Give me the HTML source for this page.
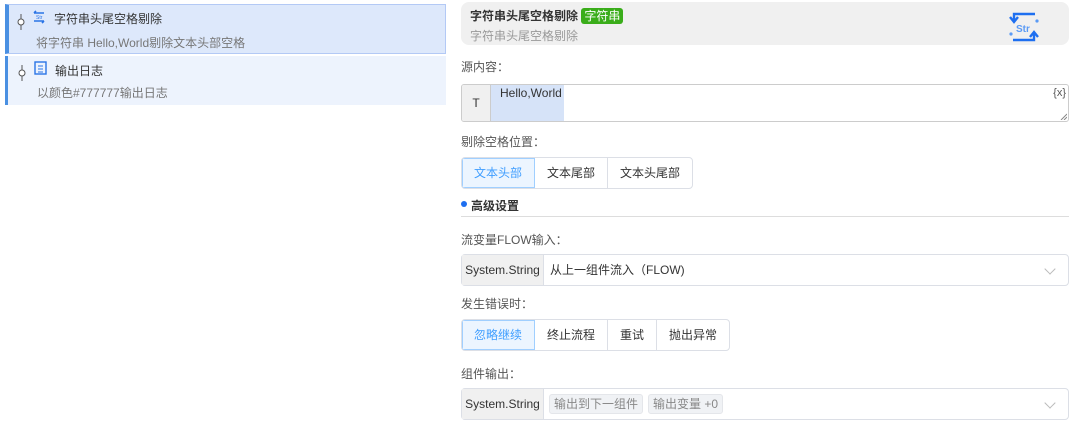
<!DOCTYPE html>
<html><head><meta charset="utf-8"><style>
*{box-sizing:border-box;margin:0;padding:0}
body{width:1075px;height:424px;background:#fff;font-family:"Liberation Sans","Noto Sans CJK SC",sans-serif;font-size:12px;color:#333;position:relative;overflow:hidden}
.abs{position:absolute}
.item{position:absolute;left:5px;width:441px}
.lbl{position:absolute;left:461px;color:#555;font-size:12px}
.seg{position:absolute;left:461px;display:flex;height:32px;border:1px solid #dcdfe6;border-radius:4px;overflow:hidden}
.seg div{padding:0 12px;line-height:30px;border-right:1px solid #dcdfe6;color:#333;font-size:12px}
.seg div:last-child{border-right:none}
.seg .on{background:#ecf5ff;color:#409eff;outline:1px solid #a0cfff;outline-offset:-1px}
.sel{position:absolute;left:461px;width:608px;height:32px;border:1px solid #dcdfe6;border-radius:4px;display:flex}
.sel .pre{width:82px;background:#f0f0f0;border-right:1px solid #dcdfe6;line-height:30px;text-align:center;color:#333}
.chev{position:absolute;right:14px;top:10px;width:8px;height:8px;border-right:1px solid #bbb;border-bottom:1px solid #bbb;transform:rotate(45deg)}
.tag{display:inline-block;background:#f0f2f5;border:1px solid #e4e6ea;border-radius:3px;color:#888;padding:0 4px;line-height:18px;margin-top:5px;margin-left:5px}
</style></head><body>

<div class="item" style="top:4px;height:50px;background:#dde8fb;border:1px solid #b3c9f5;border-left:4px solid #4a90e2">
  <svg class="abs" style="left:8px;top:9px" width="8" height="16"><line x1="4" y1="0" x2="4" y2="16" stroke="#555"/><circle cx="4" cy="8" r="3" fill="#fff" stroke="#555"/></svg>
  <svg class="abs" style="left:23px;top:5px" width="14" height="14"><path d="M2 3h10M2 3l2-2M12 11H2M12 11l-2 2" stroke="#2a74e6" stroke-width="1.6" fill="none"/><text x="4" y="9" font-size="5" fill="#2a74e6">Str</text></svg>
  <div class="abs" style="left:45px;top:5px;font-size:12px;color:#333">字符串头尾空格剔除</div>
  <div class="abs" style="left:27px;top:29px;color:#777">将字符串 Hello,World剔除文本头部空格</div>
</div>
<div class="item" style="top:56px;height:49px;background:#edf3fd;border-left:3px solid #4a90e2">
  <svg class="abs" style="left:10px;top:9px" width="8" height="16"><line x1="4" y1="0" x2="4" y2="16" stroke="#555"/><circle cx="4" cy="8" r="3" fill="#fff" stroke="#555"/></svg>
  <svg class="abs" style="left:26px;top:5px" width="14" height="14"><rect x="1" y="1" width="11" height="12" fill="none" stroke="#2a74e6" stroke-width="1.4"/><path d="M4 5h5M4 8h5M4 11h5" stroke="#2a74e6"/></svg>
  <div class="abs" style="left:47px;top:6px;color:#333">输出日志</div>
  <div class="abs" style="left:29px;top:28px;color:#777">以颜色#777777输出日志</div>
</div>

<div class="abs" style="left:461px;top:2px;width:608px;height:43px;background:#f0f0f0;border-radius:8px">
  <div class="abs" style="left:9px;top:5px;font-weight:bold;color:#333">字符串头尾空格剔除 <span style="background:#3aad1a;color:#fff;font-weight:normal;border-radius:3px;padding:0 3px;line-height:16px;display:inline-block">字符串</span></div>
  <div class="abs" style="left:9px;top:25px;color:#999">字符串头尾空格剔除</div>
  <svg class="abs" style="left:546px;top:8px" width="34" height="34"><path d="M28 4H7v6M3 7l4 5 4-5" stroke="#1e6ff0" stroke-width="2.4" fill="none"/><path d="M6 30h21v-6M23 27l4-5 4 5" stroke="#1e6ff0" stroke-width="2.4" fill="none"/><circle cx="30" cy="11" r="1.6" fill="#5a9af5"/><circle cx="4" cy="24" r="1.6" fill="#5a9af5"/><text x="9" y="22" font-size="10" font-weight="bold" fill="#5a9af5">Str</text></svg>
</div>

<div class="lbl" style="top:58px">源内容：</div>
<div class="abs" style="left:461px;top:84px;width:608px;height:38px;border:1px solid #ccc;border-radius:3px;overflow:hidden">
  <div class="abs" style="left:0;top:0;width:29px;height:36px;background:#f0f0f0;border-right:1px solid #ccc;text-align:center;line-height:36px">T</div>
  <div class="abs" style="left:29px;top:0;width:73px;height:36px;background:#d6e3f8"></div>
  <div class="abs" style="left:38px;top:1px;color:#333">Hello,World</div>
  <div class="abs" style="right:2px;top:2px;color:#555;font-size:11px">{x}</div>
  <svg class="abs" style="right:1px;bottom:1px" width="7" height="7"><path d="M1 7L7 1M4 7L7 4" stroke="#888"/></svg>
</div>

<div class="lbl" style="top:133px">剔除空格位置：</div>
<div class="seg" style="top:157px"><div class="on">文本头部</div><div>文本尾部</div><div>文本头尾部</div></div>

<div class="abs" style="left:461px;top:201px;width:6px;height:6px;border-radius:50%;background:#1e6ff0"></div>
<div class="abs" style="left:471px;top:197px;font-weight:bold;color:#333">高级设置</div>
<div class="abs" style="left:461px;top:216px;width:608px;height:1px;background:#ddd"></div>

<div class="lbl" style="top:231px">流变量FLOW输入：</div>
<div class="sel" style="top:254px"><div class="pre">System.String</div><div style="line-height:30px;padding-left:6px">从上一组件流入（FLOW)</div><div class="chev"></div></div>

<div class="lbl" style="top:295px">发生错误时：</div>
<div class="seg" style="top:319px"><div class="on">忽略继续</div><div>终止流程</div><div>重试</div><div>抛出异常</div></div>

<div class="lbl" style="top:365px">组件输出：</div>
<div class="sel" style="top:388px"><div class="pre">System.String</div><div><span class="tag">输出到下一组件</span><span class="tag">输出变量 +0</span></div><div class="chev"></div></div>
</body></html>
